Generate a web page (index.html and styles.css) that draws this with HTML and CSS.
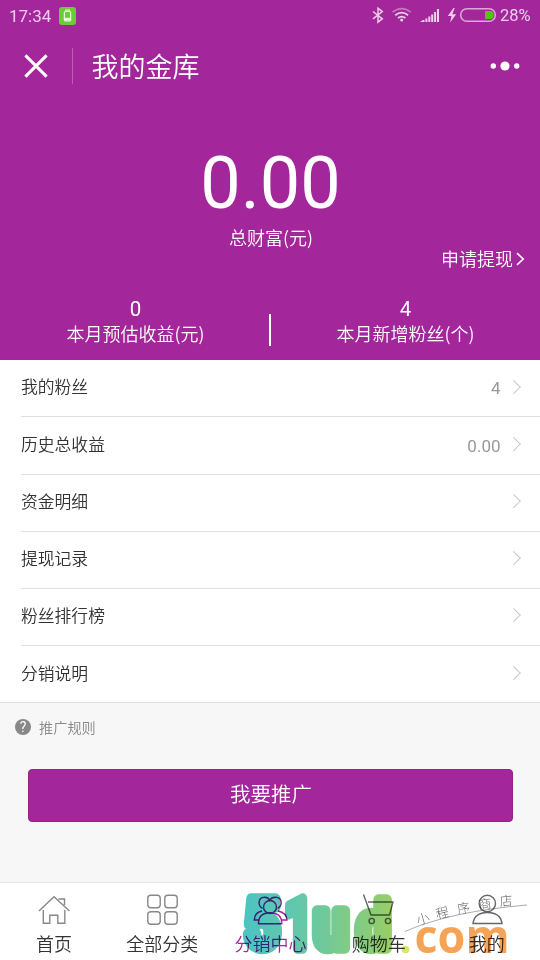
FILE: index.html
```html
<!DOCTYPE html>
<html lang="zh-CN">
<head>
<meta charset="utf-8">
<title>我的金库</title>
<link rel="stylesheet" href="styles.css">
</head>
<body>
<main class="screen">
  <section class="hero">
    <div class="status">
      <span class="time">17:34</span>
      <svg class="badge" width="17" height="18" viewBox="0 0 17 18"><rect width="17" height="18" rx="3" fill="#6ccb3a"/><path d="M6.7 4.2V3h3.6v1.2" fill="none" stroke="#e9f8e0" stroke-width="1.2"/><rect x="5.4" y="4.5" width="6.2" height="9.5" rx="1" fill="none" stroke="#e9f8e0" stroke-width="1.2"/><path d="M5.5 10.8h6v2.8h-6z" fill="#e9f8e0"/></svg>
      <svg class="signals" width="134" height="18" viewBox="366 7 134 18" fill="none" stroke="#efcdec">
        <path d="M373 11.5l9.3 7.3-4.3 3.4V8.2l4.3 3.4-9.3 7.2" stroke-width="1.5"/>
        <path d="M392.5 12.2q9.2-7.2 18.4 0" stroke="#c478bf" stroke-width="1.7"/><path d="M395.3 15.2q6.4-5.2 12.8 0M398 18q3.7-2.8 7.4 0" stroke-width="1.8"/><circle cx="401.7" cy="20" r="1.5" fill="#efcdec" stroke="none"/>
        <path d="M423.5 22v-2M426.4 22v-3.5M429.3 22v-5.5M432.2 22v-7.5M435.1 22v-10M438 22V9" stroke-width="2"/><path d="M420 22l3-1.7V22z" fill="#efcdec" stroke="none"/>
        <path d="M453.5 8l-5.7 8h3.7l-1.3 6.5 6-8.3h-3.9l2.4-6.2z" fill="#efcdec" stroke="none"/>
        <rect x="460.7" y="8.7" width="34.6" height="12.6" rx="6.1" stroke="#dca8d8" stroke-width="1.5"/>
        <path d="M485 11h5.5q3.2 0 3.2 4t-3.2 4H485z" fill="#4fc60b" stroke="none"/>
      </svg>
      <span class="percent">28%</span>
    </div>
    <header class="nav">
      <svg class="close" width="26" height="26" viewBox="0 0 26 26"><path d="M2.4 2.4l21.2 21.2M23.6 2.4L2.4 23.6" stroke="#fff" stroke-width="3"/></svg>
      <i class="rule"></i>
      <h1>我的金库</h1>
      <svg class="more" width="30" height="12" viewBox="0 0 30 12" fill="#fff"><circle cx="3.3" cy="6" r="2.7"/><circle cx="15" cy="6" r="4.6"/><circle cx="26.7" cy="6" r="2.7"/></svg>
    </header>
    <div class="total">0.00</div>
    <div class="caption">总财富(元)</div>
    <div class="withdraw">申请提现<svg width="9" height="14" viewBox="0 0 9 14"><path d="M1 1.2L7.2 7 1 12.8" fill="none" stroke="#fff" stroke-width="1.6"/></svg></div>
    <div class="stats">
      <div class="stat"><b>0</b><span>本月预估收益(元)</span></div>
      <i class="split"></i>
      <div class="stat"><b>4</b><span>本月新增粉丝(个)</span></div>
    </div>
  </section>
  <ul class="list">
    <li><span>我的粉丝</span><em>4</em><i class="chevron"></i></li>
    <li><span>历史总收益</span><em>0.00</em><i class="chevron"></i></li>
    <li><span>资金明细</span><em></em><i class="chevron"></i></li>
    <li><span>提现记录</span><em></em><i class="chevron"></i></li>
    <li><span>粉丝排行榜</span><em></em><i class="chevron"></i></li>
    <li><span>分销说明</span><em></em><i class="chevron"></i></li>
  </ul>
  <section class="promo">
    <div class="rules"><span class="help">?</span>推广规则</div>
    <button class="cta">我要推广</button>
  </section>
  <nav class="tabs">
    <a class="tab"><svg width="34" height="34" viewBox="37 893 34 34"><path d="M39 911l15-14.3L69.5 911M43.3 910v13.3h6.5v-8h8v8h7V910M58.5 899h6v6" /></svg><span>首页</span></a>
    <a class="tab"><svg width="34" height="34" viewBox="145 893 34 34"><rect x="147.8" y="895.3" width="12.4" height="12.4" rx="3"/><rect x="164.8" y="895.3" width="12.4" height="12.4" rx="3"/><rect x="147.8" y="911.8" width="12.4" height="12.4" rx="3"/><rect x="164.8" y="911.8" width="12.4" height="12.4" rx="3"/></svg><span>全部分类</span></a>
    <a class="tab active"><svg width="36" height="34" viewBox="252 893 36 34"><circle cx="270" cy="907" r="6.5"/><path d="M258.5 923.7c0-7 4-11 11.5-11s11.8 4 11.8 11zM262.5 908.5c-5-3-4.5-11 1.6-11.2 3.3-.2 5 1.5 5.7 3 1-2 3.3-3.2 6-3 6.5.3 7.3 8 1.8 11.2M262 911c-5 1-7.5 4-7.7 9h4.2M278 911c5 1 8.8 4 9 9H282"/></svg><span>分销中心</span></a>
    <a class="tab"><svg width="34" height="34" viewBox="363 893 34 34" class="dark"><path d="M364.5 894.5l7.5 20.5h18.5l3.5-13h-25"/><circle cx="372.7" cy="921" r="2.6"/><circle cx="389" cy="921" r="2.6"/></svg><span>购物车</span></a>
    <a class="tab"><svg width="34" height="34" viewBox="470 893 34 34" class="dark"><circle cx="487.3" cy="903.5" r="8.2"/><path d="M473 923.5c1-7 6-11 14.3-11s13.7 4 14.7 11z"/></svg><span>我的</span></a>
    <svg class="watermark" width="300" height="78" viewBox="240 882 300 78">
      <defs>
        <linearGradient id="t1"><stop offset="0" stop-color="#14b1af"/><stop offset="1" stop-color="#2bb59a"/></linearGradient>
        <linearGradient id="t2"><stop offset="0" stop-color="#2bb59a"/><stop offset="1" stop-color="#3bb884"/></linearGradient>
        <linearGradient id="t3"><stop offset="0" stop-color="#3bb884"/><stop offset="1" stop-color="#59bb60"/></linearGradient>
        <linearGradient id="t4"><stop offset="0" stop-color="#59bb60"/><stop offset="1" stop-color="#78bf35"/></linearGradient>
      </defs>
      <g class="mark">
        <text class="block c1" transform="translate(262 948) scale(.89 1)" font-size="68">5</text>
        <text class="block c2" transform="translate(298.5 948) scale(.68 1)" font-size="69">1</text>
        <text class="block c3" transform="translate(331 948) scale(.88 1)" font-size="70">u</text>
        <text class="block c4" transform="translate(373.5 948) scale(.9 1)" font-size="65">d</text>
      </g>
      <circle cx="405.5" cy="949.5" r="3.8" fill="#d9e66b"/>
      <text class="com" x="414.5" y="953" textLength="95" lengthAdjust="spacingAndGlyphs">com</text>
      <path d="M405 931.5q45-20 122-26.5" fill="none" stroke="#aaa" stroke-width="1"/>
      <g class="script"><text transform="translate(418 925) rotate(-16)">小</text><text transform="translate(437 919) rotate(-13)">程</text><text transform="translate(458 914) rotate(-10)">序</text><text transform="translate(479 909.5) rotate(-7)">商</text><text transform="translate(500 906) rotate(-5)">店</text></g>
    </svg>
  </nav>
</main>
</body>
</html>
```
FILE: styles.css
```css
* { box-sizing: border-box; }
body { margin: 0; font-family: "Noto Sans CJK SC", sans-serif; font-weight: 350; color: #333; }
svg { display: block; flex: none; }
.screen { width: 540px; height: 960px; overflow: hidden; display: flex; flex-direction: column; background: #f7f7f7; }
.hero { height: 359.5px; flex: none; background: #a3279b; color: #fff; display: flex; flex-direction: column; }
.status { height: 32px; display: flex; align-items: center; font: 16.5px/32px Roboto, sans-serif; color: #efcdec; padding: 0 7px 0 9px; }
.time { width: 50px; font-size: 17px; }
.signals { margin-left: auto; }
.percent { width: 33px; white-space: nowrap; }
.nav { height: 68px; display: flex; align-items: center; padding: 0 20px 0 23px; }
.rule { width: 1px; height: 36px; background: #bb5fb5; margin-left: 23px; }
h1 { margin: 0 auto 0 18.5px; font-size: 27px; font-weight: 350; line-height: 36px; }
.total { margin-top: 28px; text-align: center; font: 400 72px/112px Roboto, sans-serif; height: 98px; padding-left: 1px; }
.caption { height: 22px; line-height: 22px; text-align: center; font-size: 18px; padding-left: 2px; }
.withdraw { height: 21px; display: flex; justify-content: flex-end; align-items: center; gap: 3px; font-size: 18px; padding-right: 15px; line-height: 21px; }
.stats { display: flex; align-items: center; margin-top: 28px; padding-left: 1px; }
.stat { flex: 1; text-align: center; display: flex; flex-direction: column; }
.stat b { font: 400 20.5px/23px Roboto, sans-serif; }
.stat span { font-size: 18px; line-height: 24px; }
.split { width: 2px; height: 32px; background: #fff; margin-top: 17px; margin-left: -1px; }
.list { list-style: none; margin: 0; padding: .8px 0 0 21px; height: 343px; flex: none; background: #fff; border-bottom: 1px solid #e0e0e0; }
.list li { height: 57.15px; display: flex; align-items: center; border-bottom: 1px solid #e0e0e0; padding: 0 22px 4px 0; font-size: 16.8px; }
.list li:last-child { border: 0; }
.list em { margin-left: auto; margin-right: 8px; font: 400 17px/20px Roboto, sans-serif; color: #999; position: relative; top: 2px; }
.chevron { width: 9.5px; height: 9.5px; border: solid #c7c7cc; border-width: 1.7px 1.7px 0 0; transform: rotate(45deg); }
.promo { flex: 1; }
.rules { display: flex; align-items: center; height: 20px; margin: 14px 0 0 15px; font-size: 14.2px; color: #888; gap: 8px; }
.help { width: 16px; height: 16px; border-radius: 50%; background: #888; color: #fff; font: 14px/16px Roboto, sans-serif; text-align: center; }
.cta { display: block; width: 485px; height: 53px; margin: 32px 0 0 28.4px; padding: 0 0 5px; border: 1px solid #922487; border-radius: 4px; background: #a3279b; color: #fff; font: 350 20.5px "Noto Sans CJK SC", sans-serif; }
.tabs { position: relative; height: 78px; flex: none; background: #fff; border-top: 1px solid #e4e4e4; display: grid; grid-template-columns: repeat(5, 108.2px); }
.tab { display: flex; flex-direction: column; align-items: center; padding-top: 10px; font-size: 18px; }
.tab svg { fill: none; stroke: #888; stroke-width: 1.4; }
.tab svg.dark { stroke: #666; }
.tab span { line-height: 26px; margin-top: 3px; }
.active { color: #a3279b; }
.active svg { stroke: #a3279b; }
.watermark { position: absolute; left: 240px; top: -1px; mix-blend-mode: multiply; }
.mark { opacity: .76; }
.block { font-family: Roboto, sans-serif; font-weight: 700; text-anchor: middle; stroke-width: 11.5px; stroke-linejoin: round; }
.c1 { fill: url(#t1); stroke: url(#t1); }
.c2 { fill: url(#t2); stroke: url(#t2); }
.c3 { fill: url(#t3); stroke: url(#t3); }
.c4 { fill: url(#t4); stroke: url(#t4); }
.com { font: 700 46px "Open Sans", sans-serif; fill: #f28b27; fill-opacity: .78; }
.script { font: 300 13px "Noto Sans CJK SC", sans-serif; fill: #666; }
```
